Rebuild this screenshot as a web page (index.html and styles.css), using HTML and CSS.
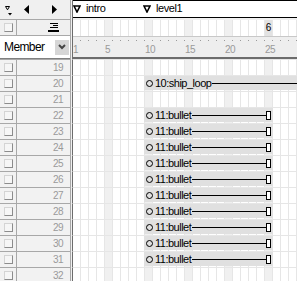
FILE: index.html
```html
<!DOCTYPE html>
<html lang="en">
<head>
    <meta charset="UTF-8">
    <title>Score</title>
    <link rel="stylesheet" href="styles.css">
</head>
<body>
    <div class="score">
        <!-- header: tools + markers / frame labels / ruler -->
        <div class="head">
            <div class="side head-side">
                <div class="tools">
                    <svg class="ico-menu" width="8" height="12" viewBox="0 0 8 12">
                        <polygon points="0.5,1.5 4.5,1.5 2.5,4.8" fill="none" stroke="#000" stroke-width="1"/>
                        <polygon points="3,8 7,8 5,10.5" fill="#000"/>
                    </svg>
                    <svg class="ico-prev" width="5" height="9" viewBox="0 0 5 9">
                        <polygon points="5,0 0,4.5 5,9" fill="#000"/>
                    </svg>
                    <svg class="ico-next" width="5" height="9" viewBox="0 0 5 9">
                        <polygon points="0,0 5,4.5 0,9" fill="#000"/>
                    </svg>
                </div>
                <div class="opts">
                    <span class="opt-cell"><span class="vis"></span></span>
                    <svg class="ico-align" width="11" height="9" viewBox="0 0 11 9">
                        <rect x="2" y="0" width="8" height="1" fill="#000"/>
                        <rect x="5" y="2" width="5" height="1" fill="#000"/>
                        <rect x="2" y="4" width="8" height="1" fill="#000"/>
                        <rect x="0" y="7" width="11" height="2" fill="#000"/>
                    </svg>
                </div>
                <div class="member">
                    <span class="member-label">Member</span>
                    <span class="drop">
                        <svg width="8" height="6" viewBox="0 0 8 6">
                            <polyline points="1,1 4,4 7,1" fill="none" stroke="#444" stroke-width="2"/>
                        </svg>
                    </span>
                </div>
            </div>
            <div class="track head-track">
                <div class="markers">
                    <span class="marker marker-intro">
                        <svg width="8" height="8" viewBox="0 0 8 8"><polygon points="1,1 7,1 4,7" fill="none" stroke="#000" stroke-width="1.6"/></svg>intro
                    </span>
                    <span class="marker marker-level">
                        <svg width="8" height="8" viewBox="0 0 8 8"><polygon points="1,1 7,1 4,7" fill="none" stroke="#000" stroke-width="1.6"/></svg>level1
                    </span>
                </div>
                <div class="frames grid-bg">
                    <span class="current">6</span>
                </div>
                <div class="ruler">
                    <span class="tick-first">1</span>
                    <span>5</span>
                    <span>10</span>
                    <span>15</span>
                    <span>20</span>
                    <span>25</span>
                </div>
            </div>
        </div>

        <!-- sprite channels -->
        <div class="channels">
            <div class="ch"><div class="side ch-side"><span class="opt-cell"><span class="vis"></span></span><span class="num">19</span></div><div class="track cells grid-bg"></div></div>
            <div class="ch"><div class="side ch-side"><span class="opt-cell"><span class="vis"></span></span><span class="num">20</span></div><div class="track cells grid-bg">
                <div class="sprite sprite-loop"><span class="dot"></span><span class="label">10:ship_loop</span><span class="wire"></span></div>
            </div></div>
            <div class="ch"><div class="side ch-side"><span class="opt-cell"><span class="vis"></span></span><span class="num">21</span></div><div class="track cells grid-bg"></div></div>
            <div class="ch"><div class="side ch-side"><span class="opt-cell"><span class="vis"></span></span><span class="num">22</span></div><div class="track cells grid-bg">
                <div class="sprite"><span class="dot"></span><span class="label">11:bullet</span><span class="wire"></span><span class="end"></span></div>
            </div></div>
            <div class="ch"><div class="side ch-side"><span class="opt-cell"><span class="vis"></span></span><span class="num">23</span></div><div class="track cells grid-bg">
                <div class="sprite"><span class="dot"></span><span class="label">11:bullet</span><span class="wire"></span><span class="end"></span></div>
            </div></div>
            <div class="ch"><div class="side ch-side"><span class="opt-cell"><span class="vis"></span></span><span class="num">24</span></div><div class="track cells grid-bg">
                <div class="sprite"><span class="dot"></span><span class="label">11:bullet</span><span class="wire"></span><span class="end"></span></div>
            </div></div>
            <div class="ch"><div class="side ch-side"><span class="opt-cell"><span class="vis"></span></span><span class="num">25</span></div><div class="track cells grid-bg">
                <div class="sprite"><span class="dot"></span><span class="label">11:bullet</span><span class="wire"></span><span class="end"></span></div>
            </div></div>
            <div class="ch"><div class="side ch-side"><span class="opt-cell"><span class="vis"></span></span><span class="num">26</span></div><div class="track cells grid-bg">
                <div class="sprite"><span class="dot"></span><span class="label">11:bullet</span><span class="wire"></span><span class="end"></span></div>
            </div></div>
            <div class="ch"><div class="side ch-side"><span class="opt-cell"><span class="vis"></span></span><span class="num">27</span></div><div class="track cells grid-bg">
                <div class="sprite"><span class="dot"></span><span class="label">11:bullet</span><span class="wire"></span><span class="end"></span></div>
            </div></div>
            <div class="ch"><div class="side ch-side"><span class="opt-cell"><span class="vis"></span></span><span class="num">28</span></div><div class="track cells grid-bg">
                <div class="sprite"><span class="dot"></span><span class="label">11:bullet</span><span class="wire"></span><span class="end"></span></div>
            </div></div>
            <div class="ch"><div class="side ch-side"><span class="opt-cell"><span class="vis"></span></span><span class="num">29</span></div><div class="track cells grid-bg">
                <div class="sprite"><span class="dot"></span><span class="label">11:bullet</span><span class="wire"></span><span class="end"></span></div>
            </div></div>
            <div class="ch"><div class="side ch-side"><span class="opt-cell"><span class="vis"></span></span><span class="num">30</span></div><div class="track cells grid-bg">
                <div class="sprite"><span class="dot"></span><span class="label">11:bullet</span><span class="wire"></span><span class="end"></span></div>
            </div></div>
            <div class="ch"><div class="side ch-side"><span class="opt-cell"><span class="vis"></span></span><span class="num">31</span></div><div class="track cells grid-bg">
                <div class="sprite"><span class="dot"></span><span class="label">11:bullet</span><span class="wire"></span><span class="end"></span></div>
            </div></div>
            <div class="ch"><div class="side ch-side"><span class="opt-cell"><span class="vis"></span></span><span class="num">32</span></div><div class="track cells grid-bg"></div></div>
        </div>
    </div>
</body>
</html>
```

FILE: styles.css
```css
:root {
    --panel: #f0f0f0;
    --line: #a8a8a8;
    --grid-line: #e6e6e6;
    --grid-shade: #f0f0f0;
    --sprite: #e0e0e0;
}

body {
    margin: 0;
    font-family: 'Liberation Sans', Arial, sans-serif;
    font-size: 11px;
    background-color: var(--panel);
}

.score {
    width: 297px;
    height: 281px;
    overflow: hidden;
    background-color: var(--panel);
}

/* left column + right track share the same widths everywhere */
.side {
    width: 70px;
    flex-shrink: 0;
    border-right: 1px solid var(--line);
    margin-right: 1px;
}

.track {
    flex: 1;
    min-width: 0;
    border-left: 1px solid #6c6c6c;
}

/* frame columns: light line every 8px, every 5th frame shaded */
.grid-bg {
    background-color: white;
    background-image:
        repeating-linear-gradient(to right, transparent 0 7px, var(--grid-line) 7px 8px),
        repeating-linear-gradient(to right, transparent 0 31px, var(--grid-shade) 31px 39px, transparent 39px 40px);
}

/* ---------- header ---------- */

.head {
    display: flex;
    height: 59px;
}

.head-side {
    display: flex;
    flex-direction: column;
}

.tools {
    height: 19px;
    border-bottom: 1px solid var(--line);
    display: flex;
    align-items: center;
}

.ico-menu {
    margin-left: 5px;
    margin-top: 2px;
}

.ico-prev {
    margin-left: 11px;
}

.ico-next {
    margin-left: 23px;
}

.opts {
    height: 15px;
    border-bottom: 1px solid var(--line);
    display: flex;
    align-items: center;
}

.opt-cell {
    width: 16px;
    height: 100%;
    border-right: 1px solid var(--line);
    display: flex;
    align-items: center;
    justify-content: center;
    flex-shrink: 0;
}

.vis {
    width: 7px;
    height: 7px;
    background-color: #f6f6f6;
    border: 1px solid;
    border-color: #d4d4d4 #8c8c8c #8c8c8c #d4d4d4;
}

.ico-align {
    margin-left: 31px;
}

.member {
    flex: 1;
    background-color: white;
    border-bottom: 1px solid #808080;
    display: flex;
    align-items: center;
    justify-content: space-between;
    padding: 0 1px 0 4px;
}

.member-label {
    font-size: 12px;
    letter-spacing: -0.6px;
}

.drop {
    width: 14px;
    height: 15px;
    background-color: #d6d6d6;
    display: flex;
    align-items: center;
    justify-content: center;
}

.head-track {
    display: flex;
    flex-direction: column;
}

.markers {
    position: relative;
    height: 16px;
    background-color: white;
    border-top: 1px solid #000;
    border-bottom: 1px solid #000;
    margin-bottom: 2px;
}

/* markers sit at their frame on the timeline */
.marker {
    position: absolute;
    top: 1px;
    display: flex;
    align-items: center;
    gap: 5px;
    letter-spacing: -0.4px;
    line-height: 13px;
}

.marker-intro {
    left: 0;
}

.marker-level {
    left: 70px;
}

.frames {
    height: 16px;
    border-bottom: 1px solid #c8c8c8;
    position: relative;
}

.current {
    position: absolute;
    left: 192px;
    top: 0;
    width: 7px;
    height: 16px;
    background-color: #e2e2e2;
    font-size: 10px;
    line-height: 16px;
    text-align: center;
}

.ruler {
    flex: 1;
    display: flex;
    background-color: #eeeeee;
    background-image: linear-gradient(to right, transparent 7px, #9a9a9a 7px);
    background-size: 8px 1px;
    background-position: 0 3px;
    background-repeat: repeat-x;
    border-bottom: 2px solid #6c6c6c;
    color: #9a9a9a;
    font-size: 10px;
    letter-spacing: -0.5px;
    padding-top: 7px;
}

.ruler span {
    width: 40px;
    flex-shrink: 0;
}

.ruler .tick-first {
    width: 32px;
}

/* ---------- channels ---------- */

.ch {
    display: flex;
    height: 16px;
}

.ch-side {
    display: flex;
    align-items: stretch;
    border-top: 1px solid var(--line);
    background-color: #f2f2f2;
}

.num {
    flex: 1;
    text-align: right;
    padding-right: 7px;
    color: #9a9a9a;
    font-size: 10px;
    letter-spacing: -0.5px;
    line-height: 15px;
}

.cells {
    border-top: 1px solid var(--grid-line);
}

.sprite {
    margin-left: 71px;
    width: 129px;
    height: 14px;
    background-color: var(--sprite);
    display: flex;
    align-items: center;
}

.sprite-loop {
    width: auto;
}

.dot {
    width: 5px;
    height: 5px;
    border: 1px solid #000;
    border-radius: 50%;
    margin-left: 2px;
    flex-shrink: 0;
}

.label {
    margin-left: 2px;
    letter-spacing: -0.5px;
    white-space: nowrap;
}

.wire {
    flex: 1;
    height: 1px;
    background-color: #000;
    margin-left: 1px;
}

.end {
    width: 3px;
    height: 7px;
    border: 1px solid #000;
    background-color: white;
    margin-right: 2px;
}
```
